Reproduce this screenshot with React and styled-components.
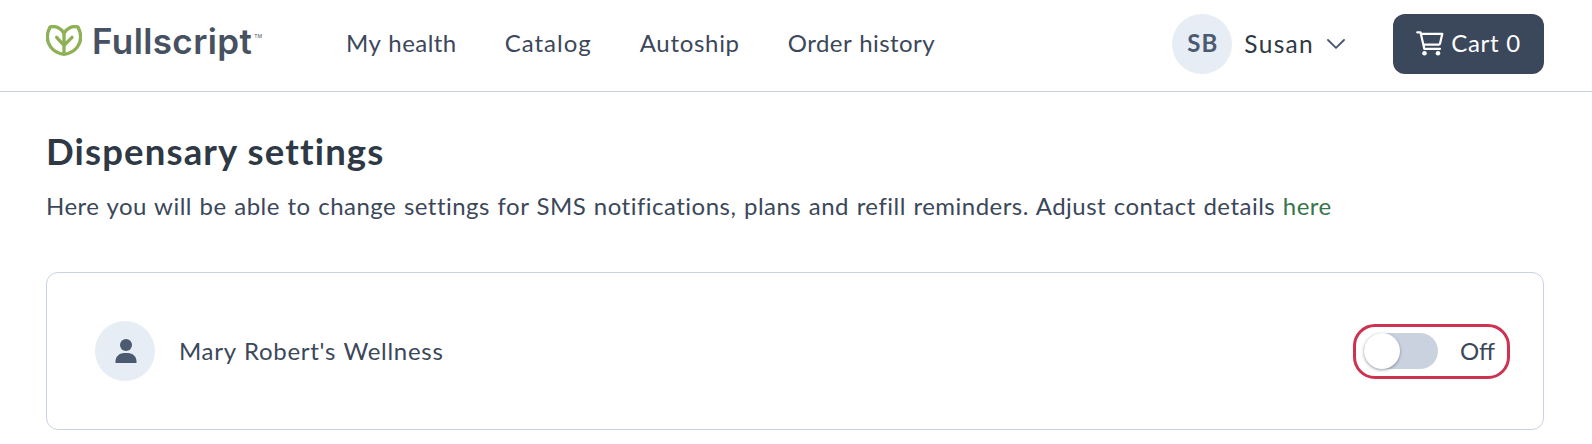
import React from 'react';
import styled, { createGlobalStyle } from 'styled-components';

const GlobalStyle = createGlobalStyle`
  * {
    box-sizing: border-box;
  }
  body {
    margin: 0;
    background: #ffffff;
    color: #3b475a;
    font-family: Lato, "Liberation Sans", sans-serif;
    font-size: 24px;
    line-height: 32px;
  }
`;

const Header = styled.header`
  display: flex;
  align-items: center;
  height: 92px;
  padding: 0 48px 4px 46px;
  border-bottom: 1px solid #c8d0da;
  white-space: nowrap;
`;

const Logo = styled.a`
  display: flex;
  align-items: center;
  width: 300px;
  height: 60px;
  padding-bottom: 6px;
  flex-shrink: 0;
`;

const LogoName = styled.span`
  margin-left: 10px;
  font-family: Inter, sans-serif;
  font-size: 35px;
  font-weight: 600;
  letter-spacing: 0.4px;
  color: #465161;
`;

const Trademark = styled.span`
  margin: 0 0 9px 2px;
  font-family: Inter, sans-serif;
  font-size: 5px;
  line-height: 6px;
  color: #465161;
`;

const Nav = styled.nav`
  display: flex;
  gap: 48px;
  flex: 1;
  padding-bottom: 2px;
`;

const NavLink = styled.a`
  letter-spacing: ${({ $spacing }) => $spacing || '0.45px'};
  word-spacing: 1px;
`;

const Account = styled.button`
  display: flex;
  align-items: center;
  padding: 0;
  border: none;
  background: none;
  font: inherit;
  color: #2e3945;
  cursor: pointer;
`;

const Avatar = styled.span`
  display: flex;
  align-items: center;
  justify-content: center;
  width: 60px;
  height: 60px;
  border-radius: 50%;
  background: #e6edf5;
  color: #4b5a70;
  font-weight: 700;
  flex-shrink: 0;
`;

const Initials = styled.span`
  padding: 0 0 2px 1px;
  letter-spacing: 1.2px;
`;

const UserName = styled.span`
  margin: 0 13px 0 12px;
  font-size: 24.5px;
  letter-spacing: 1.3px;
`;

const CartButton = styled.button`
  display: flex;
  align-items: center;
  justify-content: center;
  gap: 7px;
  width: 151px;
  height: 60px;
  margin-left: 48px;
  padding: 0;
  border: none;
  border-radius: 12px;
  background: #3b475a;
  color: #ffffff;
  font: inherit;
  cursor: pointer;
`;

const CartLabel = styled.span`
  padding-bottom: 2px;
  letter-spacing: 0.7px;
`;

const Main = styled.main`
  padding: 35px 48px 0 46px;
`;

const Title = styled.h1`
  margin: 0;
  font-size: 36.5px;
  line-height: 48px;
  font-weight: 700;
  letter-spacing: 1.15px;
  color: #2e3945;
`;

const Description = styled.p`
  margin: 15px 0 0;
  letter-spacing: 0.48px;
  word-spacing: 1px;
  white-space: nowrap;
`;

const TextLink = styled.a`
  color: #38754c;
`;

const Card = styled.section`
  display: flex;
  align-items: center;
  height: 158px;
  margin-top: 50px;
  padding: 0 33px 0 48px;
  border: 1px solid #c9d2e2;
  border-radius: 12px;
`;

const DispensaryName = styled.span`
  flex: 1;
  margin-left: 24px;
  padding-bottom: 1px;
  letter-spacing: 0.7px;
  word-spacing: 1px;
`;

const ToggleField = styled.label`
  display: flex;
  align-items: center;
  width: 157px;
  height: 55px;
  padding-left: 8px;
  border: 3px solid #cd3250;
  border-radius: 22px;
`;

const Track = styled.span`
  width: 74px;
  height: 36px;
  border-radius: 18px;
  background: #cad2e0;
`;

const Knob = styled.span`
  display: block;
  width: 36px;
  height: 36px;
  border-radius: 50%;
  background: #ffffff;
  box-shadow: 0 1px 3px rgba(46, 57, 69, 0.5);
`;

const ToggleText = styled.span`
  margin-left: 22px;
  padding-bottom: 1px;
`;

const LeafIcon = () => (
  <svg width="36" height="31" viewBox="0 0 108 93" fill="none" stroke="#8eb157" strokeWidth="10" strokeLinejoin="round" strokeLinecap="round">
    <path d="M54 25C47 10 29 1 12 6C3 24 0 47 14 66C24 79 38 86 54 88C70 86 84 79 94 66C108 47 105 24 96 6C79 1 61 10 54 25Z" />
    <path d="M54 25V86M32 37L54 61L78 37" />
  </svg>
);

const CartIcon = () => (
  <svg width="28" height="25" viewBox="0 0 28 25" fill="none" stroke="#ffffff" strokeWidth="2.2" strokeLinecap="round" strokeLinejoin="round">
    <path d="M1.200 1.300H4.500L8.300 17.800H24M5.200 2.800H26.300L24 12.700Q23.700 13.700 22.700 13.700H7.500" />
    <circle cx="8.5" cy="22.3" r="2.3" fill="#ffffff" stroke="none" />
    <circle cx="22" cy="22.3" r="2.3" fill="#ffffff" stroke="none" />
  </svg>
);

const ChevronIcon = () => (
  <svg width="18" height="10" viewBox="0 0 18 10" fill="none" stroke="#46546a" strokeWidth="1.8" strokeLinecap="round" strokeLinejoin="round">
    <path d="M1 1L9 8.8L17 1" />
  </svg>
);

const PersonIcon = () => (
  <svg width="23" height="24" viewBox="-1 0 23 24" fill="#4b5a70">
    <circle cx="11" cy="6" r="6" />
    <path d="M.5 24V22.5C.5 17.5 4.500 14 9 14H13C17.500 14 21.500 17.500 21.500 22.500V24Z" />
  </svg>
);

const App = () => {
  return (
    <>
      <GlobalStyle />
      <Header>
        <Logo>
          <LeafIcon />
          <LogoName>Fullscript</LogoName>
          <Trademark>TM</Trademark>
        </Logo>
        <Nav>
          <NavLink>My health</NavLink>
          <NavLink $spacing="1px">Catalog</NavLink>
          <NavLink $spacing="0.7px">Autoship</NavLink>
          <NavLink>Order history</NavLink>
        </Nav>
        <Account>
          <Avatar>
            <Initials>SB</Initials>
          </Avatar>
          <UserName>Susan</UserName>
          <ChevronIcon />
        </Account>
        <CartButton>
          <CartIcon />
          <CartLabel>Cart 0</CartLabel>
        </CartButton>
      </Header>
      <Main>
        <Title>Dispensary settings</Title>
        <Description>
          Here you will be able to change settings for SMS notifications, plans and refill reminders. Adjust contact details <TextLink>here</TextLink>
        </Description>
        <Card>
          <Avatar>
            <PersonIcon />
          </Avatar>
          <DispensaryName>Mary Robert's Wellness</DispensaryName>
          <ToggleField>
            <Track>
              <Knob />
            </Track>
            <ToggleText>Off</ToggleText>
          </ToggleField>
        </Card>
      </Main>
    </>
  );
};

export default App;
